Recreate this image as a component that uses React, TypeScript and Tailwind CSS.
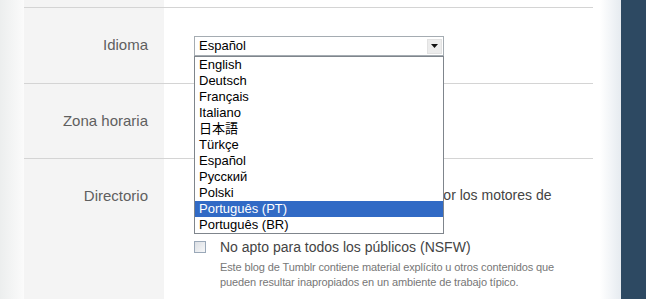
import React from "react";

const languages = [
  "English",
  "Deutsch",
  "Français",
  "Italiano",
  "日本語",
  "Türkçe",
  "Español",
  "Русский",
  "Polski",
  "Português (PT)",
  "Português (BR)",
];

function Label({ children }: { children: React.ReactNode }) {
  return (
    <div className="w-[140px] shrink-0 bg-[#f4f4f4] pr-[16px] pt-[28px] text-right text-[15px] leading-[17px] text-[#5f5f5f]">
      {children}
    </div>
  );
}

function LanguageSelect() {
  return (
    <div className="relative w-[250px]">
      <div className="flex h-[20px] items-center border border-[#a5acb2] bg-white pl-[4px] pr-[1px] text-[13px] text-black">
        <span className="flex-1">Español</span>
        <span className="flex h-[15px] w-[15px] items-center justify-center border border-[#e2e2e2] bg-[#ececec]">
          <svg width="7" height="4" viewBox="0 0 7 4">
            <path d="M0 0h7L3.5 4z" fill="#111" />
          </svg>
        </span>
      </div>
      <ul className="absolute left-0 top-full z-10 w-[250px] border border-[#7f858c] bg-white text-[13px] leading-[16px] text-black">
        {languages.map((lang) => (
          <li
            key={lang}
            className={
              lang === "Português (PT)"
                ? "h-[16px] bg-[#316ac5] pl-[4px] text-white"
                : "h-[16px] pl-[4px]"
            }
          >
            {lang}
          </li>
        ))}
      </ul>
    </div>
  );
}

function Checkbox() {
  return (
    <span className="mt-[2px] h-[12px] w-[12px] shrink-0 border border-[#9aa8b8] bg-gradient-to-br from-[#dcdfe4] to-[#f6f7f8]" />
  );
}

export default function App() {
  return (
    <div
      className="flex h-[299px] w-[646px] overflow-hidden bg-white"
      style={{ fontFamily: '"Liberation Sans", Arial, "Noto Sans CJK JP", sans-serif' }}
    >
      <div className="w-[24px] shrink-0 bg-gradient-to-r from-[#eceeee] to-[#fbfbfb]" />

      <div className="flex w-[576px] shrink-0 flex-col bg-white pr-[7px]">
        <div className="flex h-[8px] border-b border-[#d4d4d4]">
          <div className="w-[140px] bg-[#f4f4f4]" />
        </div>

        <div className="flex h-[76px] border-b border-[#d4d4d4]">
          <Label>Idioma</Label>
          <div className="pl-[30px] pt-[28px]">
            <LanguageSelect />
          </div>
        </div>

        <div className="flex h-[75px] border-b border-[#d4d4d4]">
          <Label>Zona horaria</Label>
          <div className="pl-[30px] pt-[26px]" />
        </div>

        <div className="flex flex-1">
          <Label>Directorio</Label>
          <div className="flex w-[400px] flex-col pl-[30px] pt-[28px] text-[14px] leading-[17px] text-[#444]">
            <div className="flex gap-[14px]">
              <Checkbox />
              <span className="w-[340px]">Permitir que mi blog sea indexado por los motores de búsqueda</span>
            </div>
            <div className="mt-[18px] flex gap-[14px]">
              <Checkbox />
              <div className="flex flex-col">
                <span>No apto para todos los públicos (NSFW)</span>
                <span className="mt-[4px] text-[11px] leading-[15px] tracking-[-0.12px] text-[#777]">
                  Este blog de Tumblr contiene material explícito u otros contenidos que pueden resultar inapropiados en un ambiente de trabajo típico.
                </span>
              </div>
            </div>
          </div>
        </div>
      </div>

      <div className="w-[21px] shrink-0 bg-gradient-to-r from-white to-[#e6ebf0]" />
      <div className="w-[25px] shrink-0 bg-[#2d4962]" />
    </div>
  );
}
